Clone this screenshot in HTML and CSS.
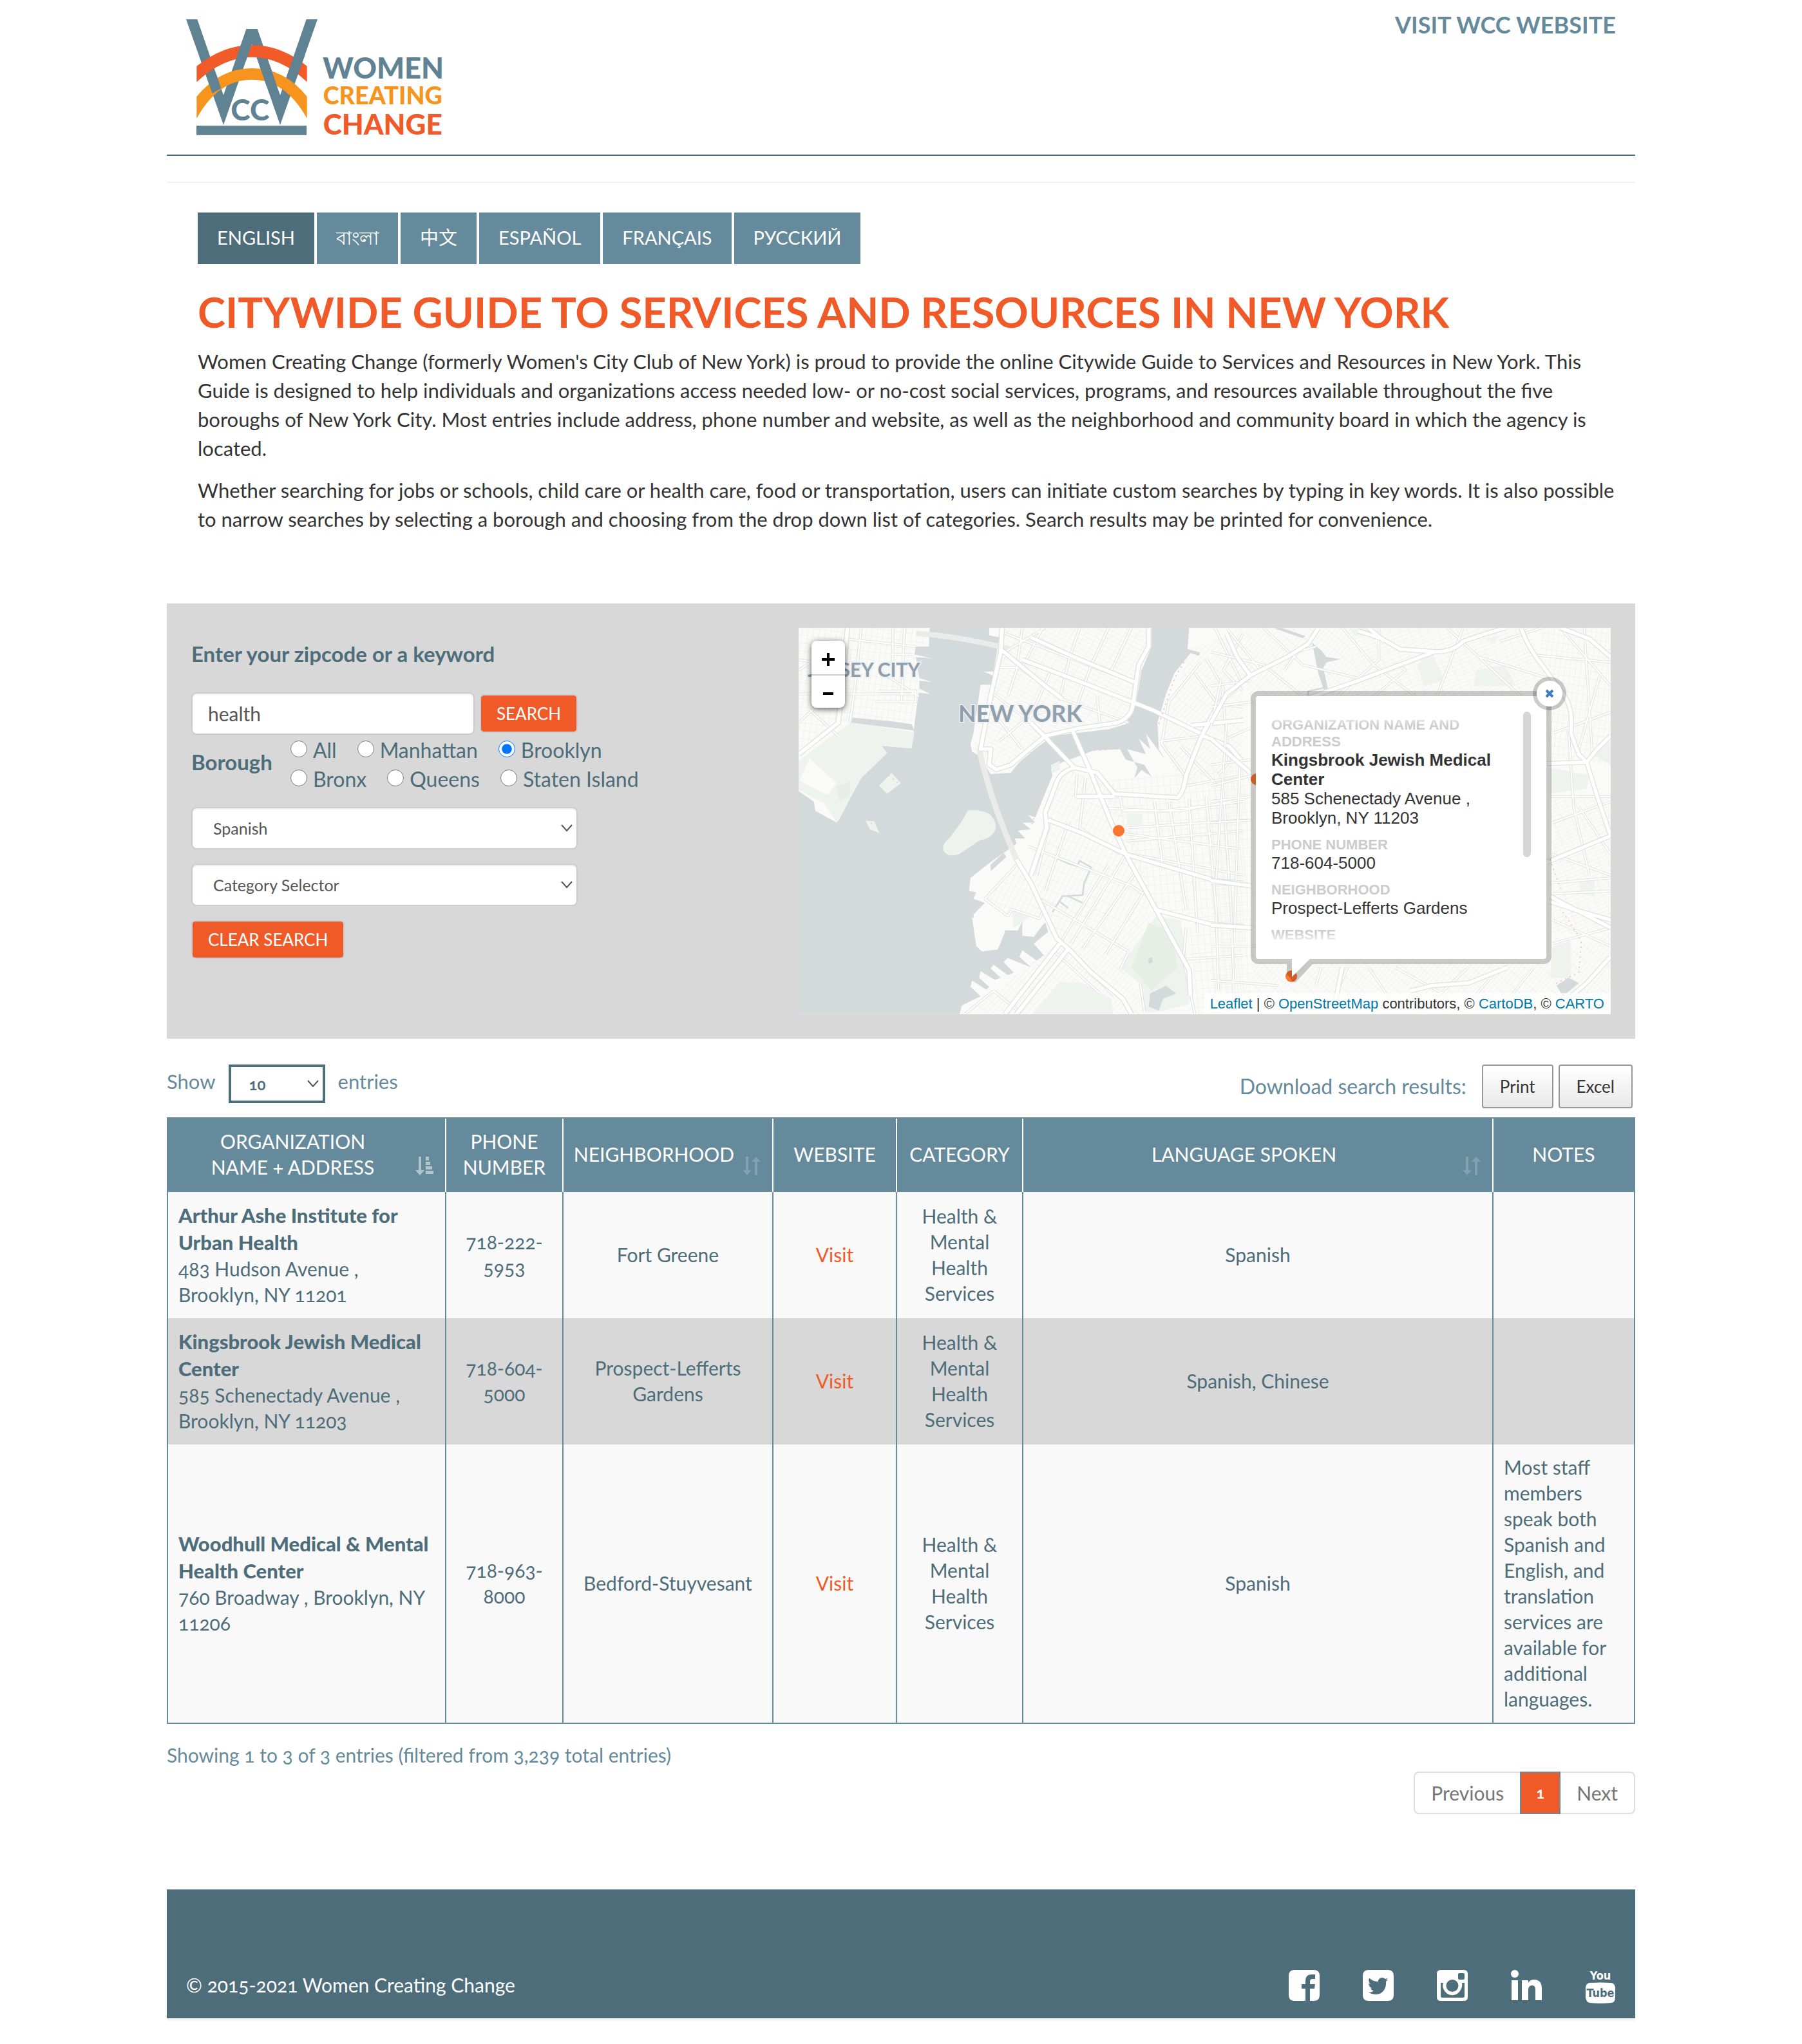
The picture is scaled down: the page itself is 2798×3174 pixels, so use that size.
FILE: index.html
```html
<!DOCTYPE html>
<html lang="en">
<head>
<meta charset="utf-8">
<meta name="viewport" content="width=device-width, initial-scale=1">
<title>Citywide Guide to Services and Resources in New York</title>
<link rel="stylesheet" href="styles.css">
</head>
<body>
<div class="container">
  <header class="site-header">
    <a class="logo" href="#" aria-label="Women Creating Change">
      <svg viewBox="117 90 1194 540" width="398" height="180" role="img">
        <path class="slate" d="M117 90H169L291 443 397 135H449L555 443 677 90H729L555 582 423 205 291 582Z"/>
        <path class="red" d="M166 308Q290 210 423 210Q560 210 680 308V382Q560 266 423 266Q290 266 166 382Z"/>
        <path class="amber" d="M166 450Q275 318 423 318Q575 318 680 450V552Q580 371 423 371Q265 371 166 552Z"/>
        <path class="slate" d="M373 205H423L397 280H347ZM620 255H671L637 350H587ZM209 350H259L280 412 239 435ZM460 310H509L540 400H491ZM165 586H678V629H165Z"/>
        <text class="slate logo-text" x="325" y="562" font-size="138">CC</text>
        <text class="slate logo-text" x="753" y="365" font-size="136">WOMEN</text>
        <text class="amber logo-text" x="755" y="485" font-size="113">CREATING</text>
        <text class="red logo-text" x="755" y="628" font-size="132">CHANGE</text>
      </svg>
    </a>
    <a class="visit-link" href="#">VISIT WCC WEBSITE</a>
  </header>

  <main>
    <section class="intro">
      <nav class="languages" aria-label="Language">
        <a class="active" href="#">ENGLISH</a>
        <a href="#" lang="bn">বাংলা</a>
        <a href="#" lang="zh">中文</a>
        <a href="#" lang="es">ESPAÑOL</a>
        <a href="#" lang="fr">FRANÇAIS</a>
        <a href="#" lang="ru">РУССКИЙ</a>
      </nav>
      <h1>CITYWIDE GUIDE TO SERVICES AND RESOURCES IN NEW YORK</h1>
      <p>Women Creating Change (formerly Women's City Club of New York) is proud to provide the online Citywide Guide to Services and Resources in New York. This Guide is designed to help individuals and organizations access needed low- or no-cost social services, programs, and resources available throughout the five boroughs of New York City. Most entries include address, phone number and website, as well as the neighborhood and community board in which the agency is located.</p>
      <p>Whether searching for jobs or schools, child care or health care, food or transportation, users can initiate custom searches by typing in key words. It is also possible to narrow searches by selecting a borough and choosing from the drop down list of categories. Search results may be printed for convenience.</p>
    </section>

    <section class="search-panel">
      <form class="search-form">
        <label class="form-title" for="keyword">Enter your zipcode or a keyword</label>
        <div class="keyword-row">
          <input class="control keyword" id="keyword" type="text" value="health">
          <button class="action" type="button">SEARCH</button>
        </div>
        <div class="borough" role="radiogroup" aria-labelledby="borough-title">
          <span class="form-title" id="borough-title">Borough</span>
          <div class="borough-options">
            <div class="borough-line">
              <label><input type="radio" name="borough">All</label>
              <label><input type="radio" name="borough">Manhattan</label>
              <label><input type="radio" name="borough" checked>Brooklyn</label>
            </div>
            <div class="borough-line">
              <label><input type="radio" name="borough">Bronx</label>
              <label><input type="radio" name="borough">Queens</label>
              <label><input type="radio" name="borough">Staten Island</label>
            </div>
          </div>
        </div>
        <select class="control" aria-label="Language spoken"><option>Spanish</option></select>
        <select class="control" aria-label="Category"><option>Category Selector</option></select>
        <button class="action clear" type="reset">CLEAR SEARCH</button>
      </form>

      <div class="map">
        <svg class="map-art" viewBox="0 0 1261 600" preserveAspectRatio="xMidYMid slice" aria-hidden="true">
          <defs>
            <pattern id="g1" width="18" height="40" patternUnits="userSpaceOnUse" patternTransform="rotate(25)"><path d="M0 0H18M0 0V40"/></pattern>
            <pattern id="g2" width="40" height="16" patternUnits="userSpaceOnUse" patternTransform="rotate(29)"><path d="M0 0H40M0 0V16"/></pattern>
            <pattern id="g3" width="22" height="34" patternUnits="userSpaceOnUse" patternTransform="rotate(-5)"><path d="M0 0H22M0 0V34"/></pattern>
            <pattern id="g4" width="15" height="42" patternUnits="userSpaceOnUse" patternTransform="rotate(40)"><path d="M0 0H15M0 0V42"/></pattern>
            <pattern id="g5" width="34" height="14" patternUnits="userSpaceOnUse" patternTransform="rotate(-22)"><path d="M0 0H34M0 0V14"/></pattern>
            <pattern id="g6" width="20" height="30" patternUnits="userSpaceOnUse" patternTransform="rotate(8)"><path d="M0 0H20M0 0V30"/></pattern>
            <g id="west-minor">
              <path d="M22 290H430M22 160 190 190M180 80 430 110M350 39V190M240 39 215 290 200 400M300 200 440 300M22 400 110 310M60 350 160 450M22 200 120 130M340 140H420M300 280H430V320H290M390 39 380 320"/>
              <path d="M740 60 1195 250M720 190 790 190 940 310 1170 400M800 39 780 200 750 300M870 39 800 190M1000 39 965 150 930 310M1100 39 1040 180 970 400M1180 39 1110 200M900 200 820 400M700 290 830 400 870 450M1060 300 1070 400M740 130 880 39M690 350 800 500M720 470 830 370 960 340"/>
              <path d="M1000 800 1020 610M990 600 985 680 1140 680 1150 735H1350L1568 690M1090 725 1280 735 1568 700M1160 800 1568 770M1160 850 1568 810M1000 800 1140 900M820 870 1180 1020 1220 1050M860 1070 1170 1270M900 760 850 980M960 780 880 1040M1140 820 1560 880M1180 900 1568 980M1100 940 930 1240M1160 900 970 1240M1200 960 1010 1260M1230 1030 1090 1280M670 1070 780 940M670 1070 750 1135 765 1110 860 1145 880 1090M1260 700 1290 960M1310 700 1370 1110M1380 690 1410 1200M1440 680 1480 1180M1500 660 1530 1180M1360 1300 1568 1285M1170 1270 1140 1340M1210 1390 1225 1500M1370 1180 1360 1300 1400 1508M940 1240 1120 1440M910 1270 1070 1430M700 1420 790 1500M600 1508 700 1420"/>
              <path d="M1568 60 1500 200 1568 280M1420 170 1310 320 1285 480 1365 600M1440 155 1500 270 1490 330 1568 340M1280 470 1430 450M1350 490 1480 640M1370 640 1568 600M1470 39 1560 240M1400 210 1480 330M1500 330 1520 550 1480 600"/>
            </g>
            <g id="west-major">
              <path d="M192 39 170 300 160 400 22 520M730 39 725 130 690 300 655 500 690 500 685 560 710 578 760 560 880 450 1000 420 1130 400Q1180 380 1185 330L1205 180 1240 110V39M830 75 980 150 1190 245M730 125 880 260 940 310M800 160 1040 260 1250 350 1420 440M830 400 880 455 980 570 1060 590 1120 670 1340 685Q1360 670 1370 600L1420 460 1480 330 1568 240M975 430 1035 580 1110 780 1160 900 1260 1100 1380 1340 1385 1440M990 570Q930 580 915 640L880 740 885 800 830 980M890 770 1010 820 1160 900 1470 1000 1568 1010M780 920 830 1010 920 1220 970 1270 1040 1350 1150 1450 1180 1508M930 1240 740 1508M960 1260 780 1508M1260 1110 1450 1165 1568 1175M990 680H1120M1390 410 1568 390M1430 450 1520 490 1568 550"/>
            </g>
            <g id="east-minor">
              <path d="M0 130 200 180 350 300M60 39 190 200M200 39 350 180 560 230M280 200 330 130 400 110M500 39 620 180 780 300M640 39V160L480 300M700 170 740 200 620 300M900 39 1180 300M960 39 860 300M1020 150 1280 230M1100 90 1260 39M0 260 150 240M0 340 160 320M0 420 40 230M60 460 150 420M0 560 150 540M0 640 160 600M0 700 150 680M0 780 150 770M20 1000 60 400M90 1200 110 560M0 1010 150 1020M30 1420 20 1130M90 1480 80 1180M0 1250H300M0 1380 260 1400"/>
              <path d="M1330 39 1521 260M1210 140 1521 170M1420 39 1450 500M1480 220 1400 500M1300 440 1521 360M1290 680H1521M1300 780 1521 700M1300 900 1521 980M1290 1010 1521 990M1300 1050 1521 1040M1360 420 1380 720 1440 980M1300 1150 1521 1250M1300 1240 1521 1180M1400 720 1521 900M400 1400 420 1330M520 1330 470 1450M600 1330 680 1450M700 1330 900 1440M980 1330 800 1500M1100 1330 960 1490M1230 1330 1100 1490"/>
            </g>
            <g id="east-major">
              <path d="M0 400 60 290 150 220 290 150 370 100 410 39M60 60 100 150 150 220M560 50 650 80 720 120 860 130Q920 130 960 90L1050 60 1120 39M600 39 660 90M1180 39Q1210 120 1260 180L1340 290Q1380 340 1370 440L1400 520 1430 550 1470 500 1521 450M1280 555 1430 550M1430 550 1470 680 1521 830M300 330 560 240 850 130M1280 930 1521 830M1290 1080 1380 1110 1521 1150M1290 1060 1521 1180M760 1420 840 1400 980 1390 1130 1330M1521 1290 1430 1390 1290 1508M0 460 150 590M0 1000 150 1020M0 1170 160 1180M500 1330 470 1480M1330 39 1440 80 1521 150"/>
            </g>
          </defs>
          <rect class="land" width="1261" height="600"/>
          <g transform="scale(.4464 .4082) translate(-22 -39)">
            <path fill="url(#g6)" d="M22 39H478L430 400 205 380 22 500Z"/>
            <path fill="url(#g2)" d="M720 39H1250L1190 330 1130 400 880 450 700 590 630 500Z"/>
            <path fill="url(#g1)" d="M930 570 1140 640 1260 1100 930 1240 820 980 880 760ZM670 1070 790 930 880 1140 740 1140Z"/>
            <path fill="url(#g3)" d="M1080 620 1568 560V1180L1265 1110Z"/>
            <path fill="url(#g4)" d="M920 1240 1260 1110 1140 1330 1200 1400 1220 1508H600ZM1380 120 1568 39V560L1360 640 1280 480Z"/>
            <path fill="url(#g3)" d="M1370 1180H1568V1508H1400Z"/>
            <path class="water" d="M478 39H685V68L720 75 700 205 665 205 698 220 695 255H655L630 440 620 480 625 510 650 525 690 595 760 590 790 550 850 495 905 450 1100 425 1160 405 1195 330 1215 200 1250 110V39H1380L1375 120 1418 132 1415 145 1385 135 1330 210 1300 290 1270 400 1275 500 1300 545 1230 440 1245 500 1205 460 1230 520 1165 500 1200 570 1190 610 1215 580 1250 605 1225 560 1160 540 1140 500 1050 505 940 550 900 575 905 600 860 720 845 760 820 750 845 780 800 780 830 805 785 810 810 840 775 840 780 860 690 930 620 990 615 1040 640 1045 630 1070 670 1085 630 1130 650 1260 710 1262 740 1190 785 1190 800 1155V1210L840 1215 870 1170 880 1160 890 1195 840 1240 875 1285 850 1305 800 1265 790 1290 830 1330 750 1295 735 1310 770 1350 750 1360 700 1320 690 1335 725 1370 705 1378 655 1345 650 1370 685 1405 675 1415 625 1380 620 1405 655 1440 590 1475 582 1508H22V660L75 700 80 735 155 780 165 765 120 705 155 700 180 670 205 680 240 610 330 515 310 488 415 497 428 380 440 285 480 290 442 270V240L485 245 442 230 430 150 485 155 425 140 430 110 475 110ZM210 380 350 395 415 405 425 430 205 400ZM690 965 745 910 735 895 690 940Z"/>
            <path class="mole" d="M625 1140 640 1250 660 1270 715 1262 740 1195 725 1190 705 1245 665 1255 650 1230 640 1145Z"/>
            <path class="park" d="M205 400 425 435 415 497 310 488 330 515 240 610 205 680 165 765 155 780 110 705 22 655V545L150 440ZM610 735Q650 725 690 750 720 790 700 820 680 845 655 845L580 900Q540 915 525 885 520 860 545 840 590 780 610 735ZM345 590 378 630 330 670 302 640ZM255 772 285 775 303 820 270 805ZM1265 1135 1350 1150 1390 1400 1380 1470 1270 1500 1225 1500 1205 1390 1140 1330ZM930 1385 1010 1390 1110 1450 1115 1508H835ZM1165 745H1218V790H1165ZM765 1115 830 1135 770 1180ZM900 560 930 545V580L905 590Z"/>
            <path class="land" d="M60 535 155 630 120 675 25 620Z"/>
            <path class="park-dark" d="M1240 1160 1320 1200 1340 1330 1250 1420 1180 1330ZM155 640 200 625 200 680 165 700Z"/>
            <path class="water" d="M1245 1430 1300 1400 1335 1430 1290 1450 1275 1495 1240 1480ZM1237 1300 1250 1290 1255 1310 1240 1318Z"/>
            <path class="creek" d="M905 1120 940 1060 1010 1055 1015 1010 1040 950 1000 925 990 945 960 935 870 890M960 1060 1010 1085M930 1080 960 1105"/>
            <path class="tunnel" d="M650 500Q690 700 780 920M430 60Q580 70 760 120"/>
            <use href="#west-minor" class="casing-minor"/><use href="#west-minor" class="road-minor"/>
            <use href="#west-major" class="casing-major"/><use href="#west-major" class="road-major"/>
            <g class="red-dots"><path d="M1050 505 1140 498M1380 135 1330 230 1270 420M335 600 370 630M275 780V800M860 690 830 800"/></g>
          </g>
          <g transform="translate(640 0) scale(.4082) translate(0 -39)">
            <path fill="url(#g4)" d="M130 39H520L560 300 150 300 120 220Z"/>
            <path fill="url(#g5)" d="M520 39H1220L1280 300H560Z"/>
            <path fill="url(#g3)" d="M0 600 160 560V1508H0Z"/>
            <path fill="url(#g6)" d="M1250 39H1521V560L1290 540Z"/>
            <path fill="url(#g5)" d="M1290 680H1521V1200H1290Z"/>
            <path fill="url(#g4)" d="M160 1310H1290L1521 1190V1508H160Z"/>
            <path class="park" d="M785 180 840 130 890 240 810 260ZM1010 200 1120 180 1160 260 1000 260ZM530 45 600 39 620 65 550 70ZM1290 570 1440 600 1430 650 1290 670ZM1521 470 1450 520 1521 560ZM1400 1000 1460 990V1060L1410 1050ZM1300 1250 1370 1230 1370 1370 1290 1370ZM1040 80 1090 70 1080 100Z"/>
            <path class="land" d="M270 200 380 110 410 220 300 250Z"/>
            <path class="water" d="M385 95 420 125 440 150 495 158 440 170 428 190 445 270 430 275 410 215ZM240 40 350 78 360 70 270 39ZM1315 1400 1360 1370 1400 1390 1340 1440Z"/>
            <path class="creek" d="M370 295V280L440 265"/>
            <use href="#east-minor" class="casing-minor"/><use href="#east-minor" class="road-minor"/>
            <use href="#east-major" class="casing-major"/><use href="#east-major" class="road-major"/>
            <g class="red-dots"><path d="M1290 920 1330 1030M1340 1120 1410 1230 1400 1350 1305 1395"/></g>
          </g>
          <text class="place" x="14" y="76" font-size="30">JERSEY CITY</text>
          <text class="place" x="248" y="146" font-size="36">NEW YORK</text>
          <g class="markers"><circle cx="497" cy="315" r="9"/><circle cx="711" cy="235" r="9"/><circle cx="765" cy="541" r="9"/></g>
        </svg>

        <div class="zoom-control">
          <button type="button" aria-label="Zoom in"><svg viewBox="0 0 20 20" width="20" height="20"><path d="M0 10H20M10 0V20"/></svg></button>
          <button type="button" aria-label="Zoom out"><svg viewBox="0 0 20 20" width="20" height="20"><path d="M2 10H18"/></svg></button>
        </div>

        <div class="popup">
          <svg class="popup-tip" viewBox="0 0 40 40" width="40" height="40" aria-hidden="true">
            <path class="tip-shade" d="M0 8H40L14 36Q8 38 6 30L0 24Z"/>
            <path class="tip-fill" d="M8 0H36L8 28Z"/>
          </svg>
          <div class="popup-body">
            <dl>
              <div><dt>ORGANIZATION NAME AND ADDRESS</dt><dd><strong>Kingsbrook Jewish Medical Center</strong><br>585 Schenectady Avenue ,<br>Brooklyn, NY 11203</dd></div>
              <div><dt>PHONE NUMBER</dt><dd>718-604-5000</dd></div>
              <div><dt>NEIGHBORHOOD</dt><dd>Prospect-Lefferts Gardens</dd></div>
              <div><dt>WEBSITE</dt></div>
            </dl>
            <span class="scroll-thumb"></span>
          </div>
          <button class="popup-close" type="button" aria-label="Close"><svg viewBox="0 0 14 14" width="14" height="14"><path d="M2 2 12 12M12 2 2 12"/></svg></button>
        </div>

        <p class="attribution"><a href="#">Leaflet</a> | © <a href="#">OpenStreetMap</a> contributors, © <a href="#">CartoDB</a>, © <a href="#">CARTO</a></p>
      </div>
    </section>

    <section class="results">
      <div class="toolbar">
        <label class="page-size">Show <select><option>10</option></select> entries</label>
        <div class="downloads">
          <span>Download search results:</span>
          <button type="button">Print</button>
          <button type="button">Excel</button>
        </div>
      </div>

      <table>
        <colgroup><col class="c-org"><col class="c-phone"><col class="c-hood"><col class="c-web"><col class="c-cat"><col class="c-lang"><col class="c-notes"></colgroup>
        <thead>
          <tr>
            <th class="sortable" scope="col">ORGANIZATION<br>NAME + ADDRESS<svg class="sort sorted" viewBox="0 0 28 29" width="28" height="29" aria-hidden="true"><path d="M5 0H9V21H14L7 29 0 21H5ZM16 0H21V6H16ZM16 8H23V13H16ZM16 15H26V20H16ZM16 22H28V27H16Z"/></svg></th>
            <th scope="col">PHONE NUMBER</th>
            <th class="sortable" scope="col">NEIGHBORHOOD<svg class="sort" viewBox="0 0 28 29" width="28" height="29" aria-hidden="true"><path d="M5 0H9V21H14L7 29 0 21H5ZM19 29H23V8H28L21 0 14 8H19Z"/></svg></th>
            <th scope="col">WEBSITE</th>
            <th scope="col">CATEGORY</th>
            <th class="sortable" scope="col">LANGUAGE SPOKEN<svg class="sort" viewBox="0 0 28 29" width="28" height="29" aria-hidden="true"><path d="M5 0H9V21H14L7 29 0 21H5ZM19 29H23V8H28L21 0 14 8H19Z"/></svg></th>
            <th scope="col">NOTES</th>
          </tr>
        </thead>
        <tbody>
          <tr>
            <td class="left"><strong>Arthur Ashe Institute for Urban Health</strong>483 Hudson Avenue ,<br>Brooklyn, NY 11201</td>
            <td>718-222-5953</td><td>Fort Greene</td><td><a href="#">Visit</a></td>
            <td>Health &amp; Mental Health Services</td><td>Spanish</td><td></td>
          </tr>
          <tr>
            <td class="left"><strong>Kingsbrook Jewish Medical Center</strong>585 Schenectady Avenue ,<br>Brooklyn, NY 11203</td>
            <td>718-604-5000</td><td>Prospect-Lefferts Gardens</td><td><a href="#">Visit</a></td>
            <td>Health &amp; Mental Health Services</td><td>Spanish, Chinese</td><td></td>
          </tr>
          <tr>
            <td class="left"><strong>Woodhull Medical &amp; Mental Health Center</strong>760 Broadway , Brooklyn, NY 11206</td>
            <td>718-963-8000</td><td>Bedford-Stuyvesant</td><td><a href="#">Visit</a></td>
            <td>Health &amp; Mental Health Services</td><td>Spanish</td>
            <td class="left">Most staff members speak both Spanish and English, and translation services are available for additional languages.</td>
          </tr>
        </tbody>
      </table>

      <p class="summary">Showing 1 to 3 of 3 entries (filtered from 3,239 total entries)</p>
      <nav class="pagination" aria-label="Pages">
        <a href="#">Previous</a><a class="current" href="#" aria-current="page">1</a><a href="#">Next</a>
      </nav>
    </section>
  </main>

  <footer class="site-footer">
    <p>© 2015-2021 Women Creating Change</p>
    <nav class="social" aria-label="Social media">
      <a href="#" aria-label="Facebook"><svg viewBox="0 0 48 48" width="48" height="48"><path fill-rule="evenodd" d="M9 0H39Q48 0 48 9V39Q48 48 39 48H33V29H40L41 22H33V18Q33 14 37 14H41V7H36Q26 7 26 17V22H20V29H26V48H9Q0 48 0 39V9Q0 0 9 0Z"/></svg></a>
      <a href="#" aria-label="Twitter"><svg viewBox="0 0 48 48" width="48" height="48"><path fill-rule="evenodd" d="M9 0H39Q48 0 48 9V39Q48 48 39 48H9Q0 48 0 39V9Q0 0 9 0ZM9 35Q14 38 20 38C32 38 37 27 36 18L39 15 36 15.500 39 12.500 35 14C31 10 24 12 24 18Q16 18 10 12.500 8 18 12 22L9 21Q10 27 14 28L12 29Q14 32 17 32.500 14 35 9 35Z"/></svg></a>
      <a href="#" aria-label="Instagram"><svg viewBox="0 0 48 48" width="48" height="48"><path fill-rule="evenodd" d="M6 0H42Q48 0 48 6V42Q48 48 42 48H6Q0 48 0 42V6Q0 0 6 0ZM35 5Q33 5 33 7V13Q33 15 35 15H41Q43 15 43 13V7Q43 5 41 5ZM6 20V40Q6 43 8 43H41Q43 43 43 40V20H39Q40 26 37 31C31 42 17 42 11 31Q8 26 10 20ZM24 15A9.500 9.500 0 1 0 24 34 9.500 9.500 0 1 0 24 15Z"/></svg></a>
      <a href="#" aria-label="LinkedIn"><svg viewBox="0 0 48 48" width="48" height="48"><circle cx="6" cy="6" r="6"/><path d="M1 16H11V47H1ZM17 16H27V20Q30 15 36 15 48 15 48 29V47H38V30Q38 24 33 24 27 24 27 31V47H17Z"/></svg></a>
      <a href="#" aria-label="YouTube"><svg viewBox="0 0 48 56" width="48" height="56"><path d="M7 24Q24 23 41 24 46 25 47 31V47Q47 54 41 55 24 57 7 55 2 54 1 47V31Q2 25 7 24Z"/><text class="tube-top" x="24" y="19" font-size="18">You</text><text class="tube-bottom" x="24" y="46" font-size="18">Tube</text></svg></a>
    </nav>
  </footer>
</div>
</body>
</html>
```
FILE: styles.css
```css
:root {
  --slate: #4d6d7a;
  --steel: #648a9b;
  --orange: #f05a28;
  --grey: #d8d8d8;
}

* { box-sizing: border-box; }

body {
  margin: 0;
  background: #fff;
  color: #333;
  font-family: Lato, "Noto Sans CJK SC", "Noto Sans", sans-serif;
  font-size: 30px;
  line-height: 40px;
  font-variant-numeric: oldstyle-nums;
}

a { text-decoration: none; }
p, h1, dl, dd { margin: 0; }
button, input, select { font-family: inherit; font-variant-numeric: inherit; }

.container { max-width: 2280px; margin: 0 auto; }

/* Header */
.site-header {
  display: flex;
  justify-content: space-between;
  align-items: flex-start;
  padding: 30px 30px;
  border-bottom: 2px solid var(--slate);
}
.logo { display: block; height: 180px; }
.logo svg { display: block; overflow: visible; }
.logo-text { font-family: Lato, sans-serif; font-weight: 900; }
.slate { fill: #5f8393; }
.red { fill: #f15a29; }
.amber { fill: #f7941d; }
.visit-link {
  margin-top: -12px;
  color: var(--steel);
  font-size: 36px;
  font-weight: 700;
}

/* Intro */
.intro {
  margin-top: 40px;
  padding: 46px 20px 108px 48px;
  border-top: 2px solid #f3f3f3;
}
.languages { display: flex; flex-wrap: wrap; gap: 4px; }
.languages a {
  height: 80px;
  padding: 0 30px;
  background: var(--steel);
  color: #fff;
  font-size: 29px;
  line-height: 78px;
}
.languages .active { background: var(--slate); }
h1 {
  margin: 39px 0 20px;
  color: var(--orange);
  font-size: 65px;
  font-weight: 700;
  line-height: 70px;
}
.intro p { max-width: 2212px; font-size: 31px; line-height: 45px; }
.intro p + p { margin-top: 20px; }

/* Search panel */
.search-panel {
  display: grid;
  grid-template-columns: 943fr 1261fr;
  padding: 38px;
  background: var(--grey);
}
.search-form {
  display: flex;
  flex-direction: column;
  align-items: flex-start;
  padding-top: 18px;
}
.form-title {
  color: var(--slate);
  font-size: 33px;
  font-weight: 700;
  line-height: 44px;
}
.keyword-row {
  display: flex;
  align-items: center;
  gap: 8px;
  margin-top: 38px;
}
.control {
  width: 600px;
  max-width: 100%;
  height: 66px;
  margin: 0 0 22px;
  padding: 0 32px;
  border: 2px solid #ccc;
  border-radius: 8px;
  background-color: #fff;
  box-shadow: inset 0 2px 2px rgba(0, 0, 0, .08);
  color: #555;
  font-size: 25px;
}
.keyword {
  width: 440px;
  margin: 0;
  padding: 0 24px;
  font-size: 30px;
}
select {
  appearance: none;
  background: #fff url("data:image/svg+xml,%3Csvg xmlns='http://www.w3.org/2000/svg' width='18' height='12'%3E%3Cpath d='M1 1l8 9 8-9' fill='none' stroke='%23555' stroke-width='2'/%3E%3C/svg%3E") no-repeat right 6px center;
}
.action {
  height: 60px;
  padding: 0 24px;
  border: 2px solid #ccc;
  border-radius: 6px;
  background: var(--orange);
  background-clip: padding-box;
  color: #fff;
  font-size: 26px;
}
.borough {
  display: flex;
  align-items: center;
  gap: 28px;
  margin: 1px 0 21px;
}
.borough .form-title { padding-bottom: 8px; }
.borough-line { display: flex; gap: 32px; }
.borough-line label {
  display: flex;
  align-items: center;
  gap: 9px;
  color: var(--slate);
  font-size: 32px;
  line-height: 45px;
}
.borough-line input { width: 26px; height: 26px; margin: 0 0 4px; }

/* Map */
.map {
  position: relative;
  height: 600px;
  overflow: hidden;
  font-family: "Liberation Sans", Arial, sans-serif;
  font-variant-numeric: lining-nums;
}
.map-art { display: block; width: 100%; height: 100%; }
.land, .mole { fill: #fafaf8; }
.water { fill: #d4dadc; }
.park { fill: #eef3ed; }
.park-dark { fill: #e6eee6; }
.map-art pattern path { fill: none; stroke: #e6e7e6; stroke-width: 2; }
.creek { fill: none; stroke: #d4dadc; stroke-width: 6; }
.tunnel { fill: none; stroke: #ebebe9; stroke-width: 20; }
.casing-minor, .casing-major, .road-minor, .road-major { fill: none; stroke-linejoin: round; }
.casing-minor { stroke: #e2e3e3; stroke-width: 10; }
.road-minor { stroke: #fff; stroke-width: 5; }
.casing-major { stroke: #dfe1e1; stroke-width: 19; }
.road-major { stroke: #fff; stroke-width: 13; }
.red-dots { fill: none; stroke: #f0c8c8; stroke-width: 5; stroke-dasharray: 5 14; }
.place {
  fill: #8f9fad;
  stroke: #eef1f2;
  stroke-width: 3px;
  paint-order: stroke;
  font-family: Lato, sans-serif;
  font-weight: 700;
}
.markers { fill: #ff7530; }

.zoom-control {
  position: absolute;
  top: 20px;
  left: 20px;
  width: 52px;
  border-radius: 8px;
  background: #fff;
  box-shadow: 0 2px 10px rgba(0, 0, 0, .65);
}
.zoom-control button {
  display: flex;
  align-items: center;
  justify-content: center;
  width: 52px;
  height: 52px;
  padding: 6px 0 0;
  border: 0;
  background: none;
}
.zoom-control button + button { border-top: 2px solid #ccc; }
.zoom-control path { stroke: #000; stroke-width: 4; }

.popup {
  position: absolute;
  top: 98px;
  right: 92px;
  width: 467px;
  border: 8px solid rgba(0, 0, 0, .2);
  border-radius: 12px;
  background: #fff;
  background-clip: padding-box;
}
.popup-body { position: relative; height: 408px; padding: 32px 70px 0 24px; }
.popup-body::before, .popup-body::after {
  content: "";
  position: absolute;
  left: 20px;
  right: 60px;
  height: 20px;
}
.popup-body::before { top: 25px; background: linear-gradient(#fff, transparent); }
.popup-body::after { bottom: 22px; background: linear-gradient(transparent, #fff); }
.popup dl { display: grid; gap: 14px; font-size: 26px; line-height: 30px; }
.popup dt {
  color: #ccc;
  font-size: 22px;
  font-weight: 700;
  line-height: 26px;
}
.popup dd { margin-right: -24px; }
.scroll-thumb {
  position: absolute;
  top: 24px;
  right: 24px;
  width: 12px;
  height: 226px;
  border-radius: 6px;
  background: #d5d5d5;
}
.popup-tip { position: absolute; left: 48px; bottom: -40px; }
.tip-shade { fill: rgba(0, 0, 0, .2); }
.tip-fill { fill: #fff; }
.popup-close {
  position: absolute;
  top: -30px;
  right: -31px;
  display: flex;
  align-items: center;
  justify-content: center;
  width: 52px;
  height: 52px;
  padding: 0;
  border: 6px solid rgba(0, 0, 0, .2);
  border-radius: 50%;
  background: #fff;
  background-clip: padding-box;
}
.popup-close path { stroke: #3a7cc0; stroke-width: 4; }
.attribution {
  position: absolute;
  right: 0;
  bottom: 0;
  padding: 0 10px;
  background: rgba(255, 255, 255, .7);
  font-size: 22px;
  line-height: 33px;
}
.attribution a { color: #0078a8; }

/* Results */
.toolbar {
  display: flex;
  justify-content: space-between;
  align-items: flex-start;
  padding: 40px 4px 14px 0;
  color: var(--steel);
}
.page-size { display: flex; gap: 20px; font-size: 31px; line-height: 52px; }
.page-size select {
  width: 150px;
  height: 60px;
  padding: 0 28px;
  border: 4px solid var(--slate);
  color: var(--slate);
  font-size: 24px;
  font-weight: 700;
}
.downloads { display: flex; gap: 8px; align-items: center; }
.downloads span { margin-right: 16px; font-size: 32px; }
.downloads button {
  height: 68px;
  padding: 0 26px;
  border: 2px solid #999;
  border-radius: 4px;
  background: linear-gradient(#fff, #e9e9e9);
  color: #333;
  font-size: 26px;
}

table {
  width: 100%;
  table-layout: fixed;
  border: 2px solid var(--steel);
  border-collapse: separate;
  border-spacing: 0;
  color: var(--slate);
  text-align: center;
}
.c-org { width: 432px; }
.c-phone { width: 182px; }
.c-hood { width: 326px; }
.c-web { width: 192px; }
.c-cat { width: 196px; }
.c-notes { width: 218px; }
th {
  position: relative;
  padding: 15px 14px 19px;
  background: var(--steel);
  color: #fff;
  font-weight: 400;
  text-align: center;
  border-right: 2px solid #fff;
}
th.sortable { padding-right: 57px; }
.sort {
  position: absolute;
  right: 18px;
  bottom: 26px;
  fill: #fff;
  opacity: .2;
}
.sort.sorted { opacity: .5; }
td { padding: 15px 16px 17px; border-right: 2px solid var(--steel); }
th:last-child, td:last-child { border-right: 0; }
tbody tr { background: #f9f9f9; }
tbody tr:nth-child(even) { background: var(--grey); }
td.left { padding-right: 8px; text-align: left; }
td strong { display: block; font-size: 31px; font-weight: 900; line-height: 42px; }
td a { color: var(--orange); }

.summary { padding-top: 28px; color: var(--steel); line-height: 40px; }
.pagination { display: flex; justify-content: flex-end; margin-top: 6px; }
.pagination a {
  padding: 0 25px;
  border: 2px solid #ddd;
  color: #777;
  line-height: 62px;
}
.pagination a:first-child { border-right: 0; border-radius: 8px 0 0 8px; }
.pagination a:last-child { border-left: 0; border-radius: 0 8px 8px 0; }
.pagination .current {
  padding: 0 23px;
  border-color: var(--steel);
  background: var(--orange);
  color: #fff;
  font-size: 24px;
  font-weight: 700;
}

/* Footer */
.site-footer {
  display: flex;
  justify-content: space-between;
  align-items: flex-end;
  height: 200px;
  margin: 117px 0 40px;
  padding: 0 30px 23px;
  background: var(--slate);
  box-shadow: 0 2px 4px rgba(0, 0, 0, .1);
  color: #fff;
}
.site-footer p { padding-bottom: 9px; }
.social { display: flex; align-items: center; gap: 67px; }
.social a { display: flex; }
.social svg { fill: #fff; }
.social text {
  font-family: "Liberation Sans Narrow", "DejaVu Sans Condensed", "Liberation Sans", sans-serif;
  font-weight: 700;
  text-anchor: middle;
}
.social .tube-bottom { fill: var(--slate); }
```
